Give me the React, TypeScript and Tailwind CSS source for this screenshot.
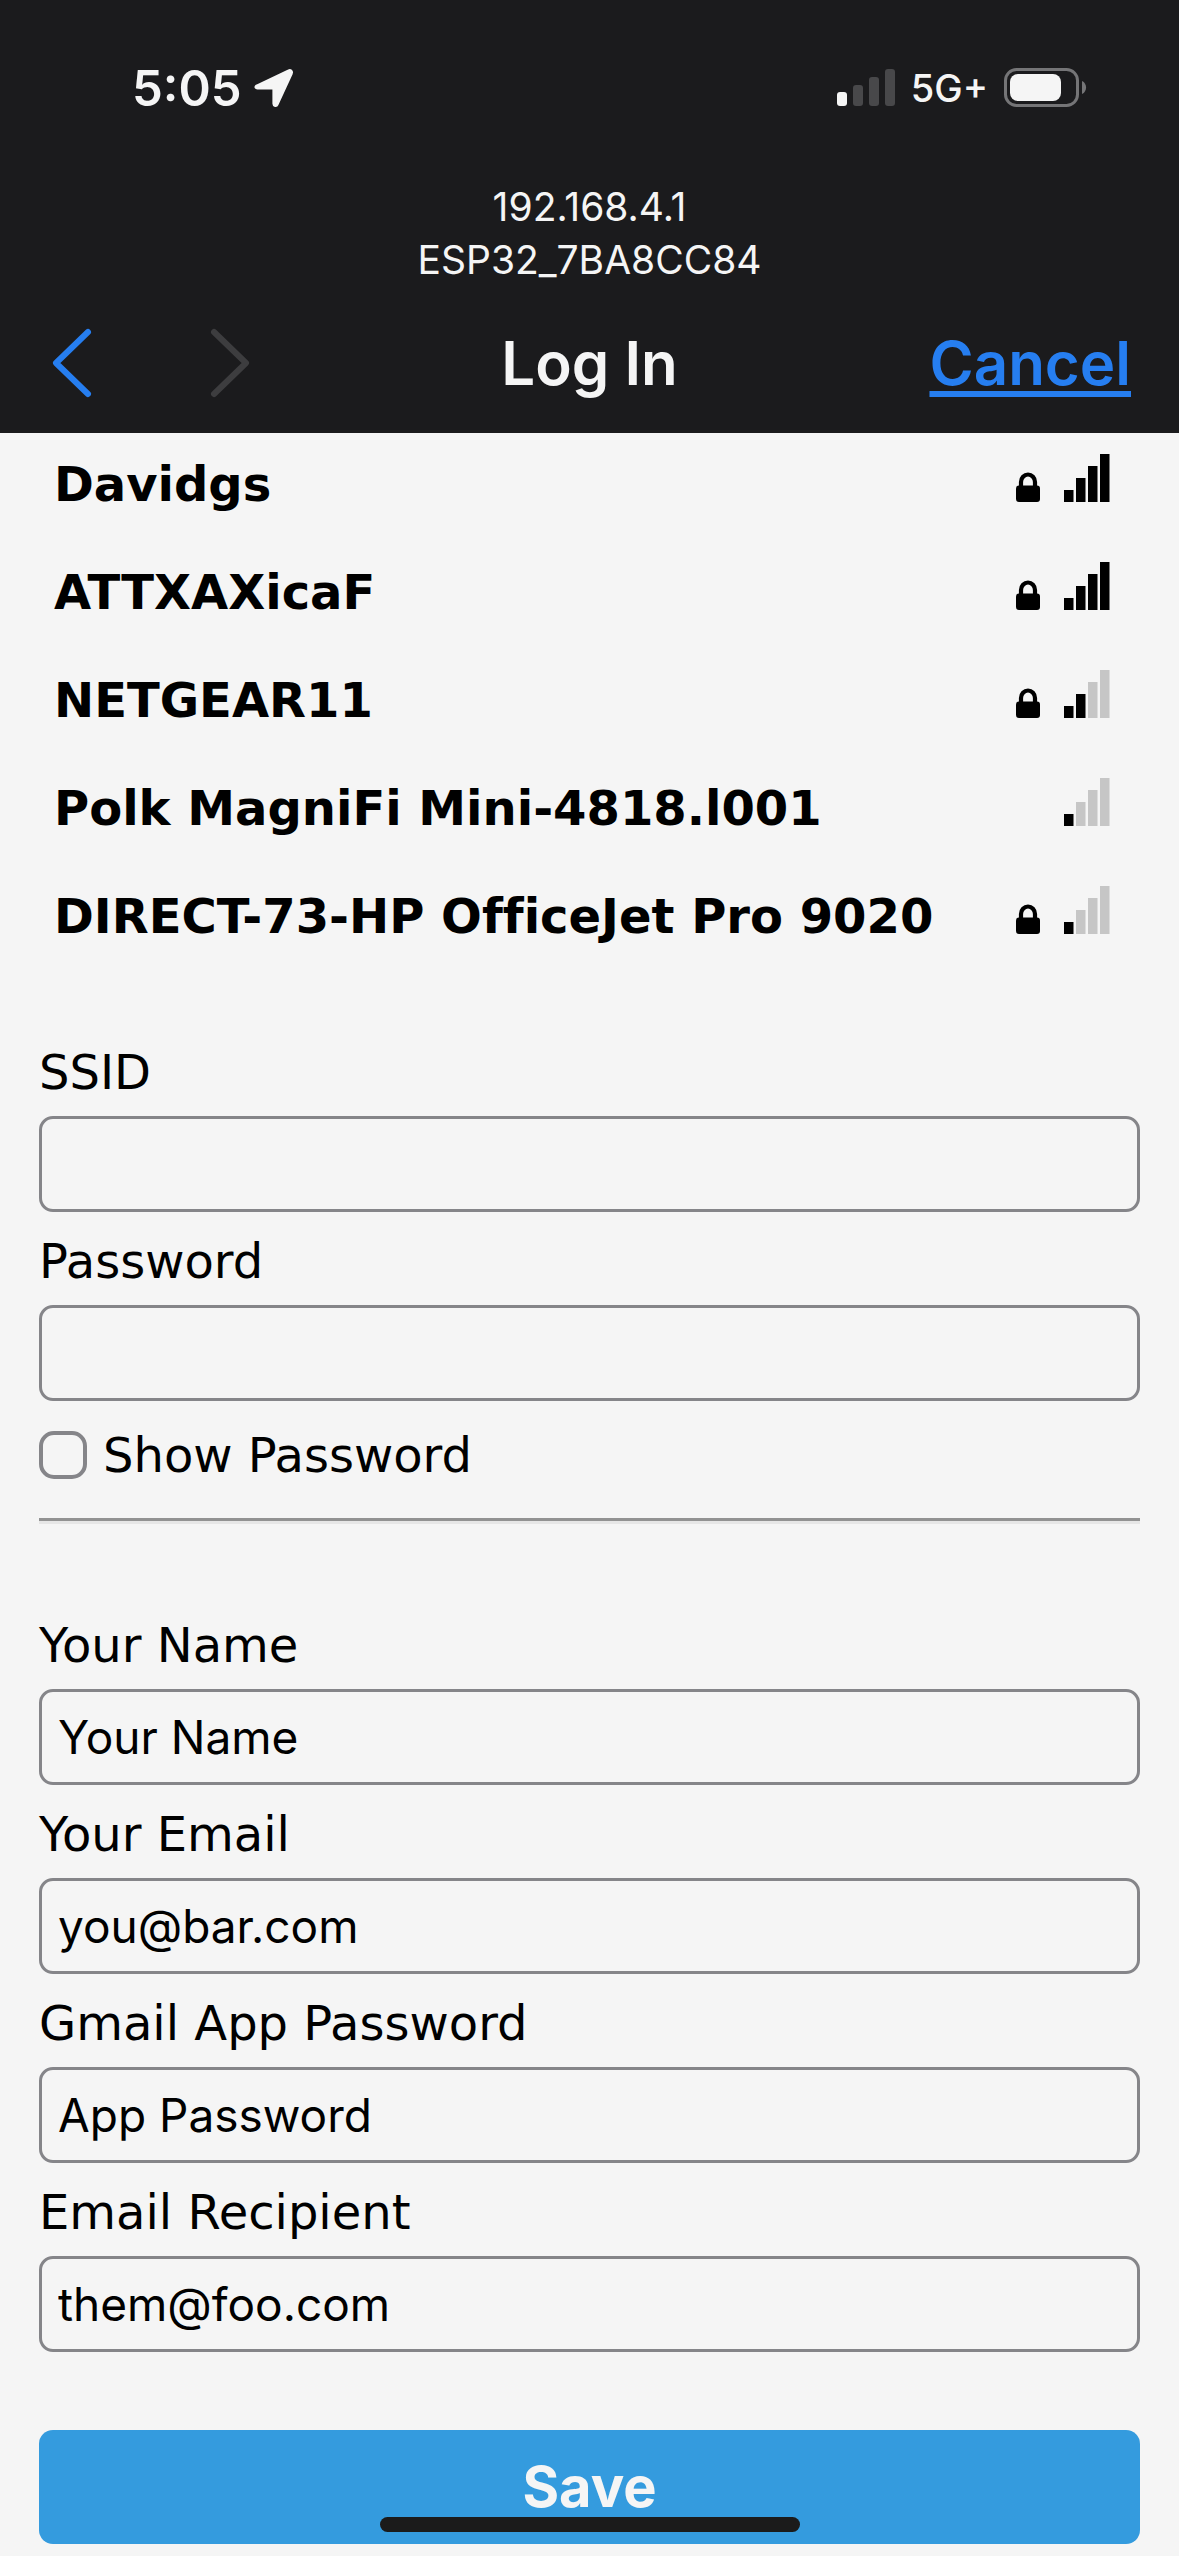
import { useState } from "react";

type Network = { ssid: string; locked: boolean; bars: number };

const networks: Network[] = [
  { ssid: "Davidgs", locked: true, bars: 4 },
  { ssid: "ATTXAXicaF", locked: true, bars: 4 },
  { ssid: "NETGEAR11", locked: true, bars: 2 },
  { ssid: "Polk MagniFi Mini-4818.l001", locked: false, bars: 1 },
  { ssid: "DIRECT-73-HP OfficeJet Pro 9020", locked: true, bars: 1 },
];

function LocationArrow() {
  return (
    <svg width="40" height="40" viewBox="0 0 40 40" aria-hidden="true">
      <path
        d="M3 18.5 35 3.2a1.4 1.4 0 0 1 1.9 1.9L22.6 36.2c-.5 1.2-2.2.9-2.2-.5V20.6a1 1 0 0 0-1-1H3.4c-1 0-1.3-.8-.4-1.1Z"
        fill="#f5f5f5"
        stroke="#f5f5f5"
        strokeWidth="4"
        strokeLinejoin="round"
      />
    </svg>
  );
}

function CellSignal() {
  return (
    <svg width="58" height="38" viewBox="0 0 58 38" role="img" aria-label="Cellular signal">
      <rect x="0" y="23" width="10" height="14" rx="3" fill="#f5f5f5" />
      <rect x="16" y="16" width="10" height="21" rx="3" fill="#48484a" />
      <rect x="32" y="8" width="10" height="29" rx="3" fill="#48484a" />
      <rect x="48" y="0" width="10" height="37" rx="3" fill="#48484a" />
    </svg>
  );
}

function Battery() {
  return (
    <svg width="83" height="40" viewBox="0 0 83 40" role="img" aria-label="Battery">
      <rect x="1.5" y="1.5" width="72" height="36" rx="11" fill="none" stroke="#757577" strokeWidth="3" />
      <rect x="6" y="6" width="51" height="27" rx="8" fill="#f5f5f5" />
      <path d="M78 13c5.400 2.200 5.400 10.800 0 13Z" fill="#757577" />
    </svg>
  );
}

function Lock() {
  return (
    <svg width="24" height="30" viewBox="0 0 24 30" role="img" aria-label="Secured">
      <rect x="0" y="13.500" width="24" height="16.500" rx="3" fill="#000" />
      <path d="M5 15V10a7 7.500 0 0 1 14 0v5" fill="none" stroke="#000" strokeWidth="4.200" />
    </svg>
  );
}

function WifiBars({ bars }: { bars: number }) {
  return (
    <svg width="46" height="48" viewBox="0 0 46 48" role="img" aria-label={`Signal ${bars} of 4`}>
      {[0, 1, 2, 3].map((i) => (
        <rect key={i} x={i * 12} y={36 - i * 12} width="9.500" height={12 + i * 12} fill={i < bars ? "#000" : "#c6c6c6"} />
      ))}
    </svg>
  );
}

type FieldProps = { id: string; label: string; type?: string; value: string; onChange: (v: string) => void };

function Field({ id, label, type = "text", value, onChange }: FieldProps) {
  return (
    <div className="flex flex-col">
      <label htmlFor={id} className="pt-4 pb-2.5 text-[48px] leading-[67px]">
        {label}
      </label>
      <input
        id={id}
        type={type}
        value={value}
        onChange={(e) => onChange(e.target.value)}
        className="h-24 w-full rounded-[14px] border-3 border-[#858589] bg-transparent px-4 font-['Inter',sans-serif] text-[46px]"
      />
    </div>
  );
}

export default function App() {
  const [ssid, setSsid] = useState("");
  const [password, setPassword] = useState("");
  const [show, setShow] = useState(false);
  const [name, setName] = useState("Your Name");
  const [email, setEmail] = useState("you@bar.com");
  const [appPassword, setAppPassword] = useState("App Password");
  const [recipient, setRecipient] = useState("them@foo.com");

  return (
    <div className="min-h-screen bg-[#f5f5f5] font-['DejaVu_Sans',sans-serif] text-black">
      <header className="bg-[#1b1b1d] pb-8 font-['Inter',sans-serif] text-[#f5f5f5]">
        <div className="flex h-44 items-center justify-between pr-[92px] pl-[132px]">
          <div className="flex items-center gap-3">
            <span className="text-[49px] leading-none font-semibold">5:05</span>
            <LocationArrow />
          </div>
          <div className="flex items-center gap-4">
            <CellSignal />
            <span className="text-[38px] leading-none font-medium">5G+</span>
            <Battery />
          </div>
        </div>
        <div className="pt-1 text-center text-[39px] leading-[53px]">
          <p>192.168.4.1</p>
          <p>ESP32_7BA8CC84</p>
        </div>
        <nav className="mt-[39px] grid grid-cols-3 items-center px-12">
          <div className="flex gap-28">
            <button type="button" aria-label="Back">
              <svg width="48" height="76" viewBox="0 0 48 76" fill="none" stroke="#267ef0" strokeWidth="6" strokeLinecap="round" strokeLinejoin="round">
                <path d="M40 7 8 38l32 31" />
              </svg>
            </button>
            <button type="button" aria-label="Forward" disabled>
              <svg width="48" height="76" viewBox="0 0 48 76" fill="none" stroke="#3d3d3f" strokeWidth="6" strokeLinecap="round" strokeLinejoin="round">
                <path d="M6 7l32 31L6 69" />
              </svg>
            </button>
          </div>
          <h1 className="text-center text-[60px] leading-[76px] font-semibold">Log In</h1>
          <a
            href="#cancel"
            className="justify-self-end text-[60px] leading-[76px] font-semibold text-[#267ef0] underline decoration-[6px] underline-offset-[6px]"
          >
            Cancel
          </a>
        </nav>
      </header>

      <main className="px-[39px] pb-3">
        <ul>
          {networks.map((n) => (
            <li key={n.ssid}>
              <button
                type="button"
                onClick={() => setSsid(n.ssid)}
                className="flex h-27 w-full items-center justify-between pr-[30px] pb-1.5 pl-[15px] text-left"
              >
                <span className="text-[48px] leading-none font-bold whitespace-nowrap [font-variant-ligatures:none]">{n.ssid}</span>
                <span className="flex items-end gap-6 pb-3">
                  {n.locked && <Lock />}
                  <WifiBars bars={n.bars} />
                </span>
              </button>
            </li>
          ))}
        </ul>

        <form onSubmit={(e) => e.preventDefault()}>
          <section className="mt-[50px]">
            <Field id="ssid" label="SSID" value={ssid} onChange={setSsid} />
            <Field id="password" label="Password" type={show ? "text" : "password"} value={password} onChange={setPassword} />
            <div className="mt-6 flex items-center gap-4">
              <input
                id="show"
                type="checkbox"
                checked={show}
                onChange={(e) => setShow(e.target.checked)}
                className="size-12 appearance-none rounded-[15px] border-4 border-[#858589] checked:bg-[#267ef0]"
              />
              <label htmlFor="show" className="text-[48px] leading-[60px]">
                Show Password
              </label>
            </div>
            <hr className="mt-[33px] h-1.5 border-t-3 border-b-3 border-t-[#929292] border-b-[#e6e6e6]" />
          </section>

          <section className="mt-[72px]">
            <Field id="name" label="Your Name" value={name} onChange={setName} />
            <Field id="email" label="Your Email" value={email} onChange={setEmail} />
            <Field id="app-password" label="Gmail App Password" value={appPassword} onChange={setAppPassword} />
            <Field id="recipient" label="Email Recipient" value={recipient} onChange={setRecipient} />
          </section>

          <button
            type="submit"
            className="mt-[78px] h-[114px] w-full rounded-[14px] bg-[#349bde] font-['Inter',sans-serif] text-[56px] font-bold text-[#f5f5f5]"
          >
            Save
          </button>
        </form>
      </main>

      <div className="fixed bottom-6 left-1/2 h-[15px] w-[420px] -translate-x-1/2 rounded-full bg-[#1b1b1b]" />
    </div>
  );
}
